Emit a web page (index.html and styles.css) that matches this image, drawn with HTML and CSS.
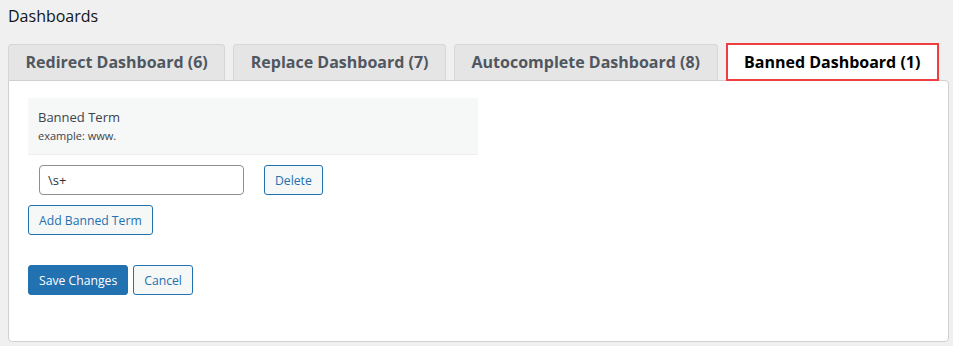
FILE: index.html
```html
<!DOCTYPE html>
<html lang="en">
<head>
    <meta charset="UTF-8">
    <title>Dashboards</title>
    <link rel="stylesheet" href="styles.css">
</head>
<body>
    <div class="wrap">
        <h2 class="page-title">Dashboards</h2>

        <!-- Onglets -->
        <nav class="tabs">
            <a class="tab">Redirect Dashboard (6)</a>
            <a class="tab">Replace Dashboard (7)</a>
            <a class="tab">Autocomplete Dashboard (8)</a>
            <a class="tab active">Banned Dashboard (1)</a>
        </nav>

        <!-- Contenu de l'onglet actif -->
        <div class="panel">
            <div class="field-head">
                <div class="field-label">Banned Term</div>
                <div class="field-hint">example: www.</div>
            </div>

            <div class="term-row">
                <input type="text" class="term-input" value="\s+">
                <button class="button">Delete</button>
            </div>

            <button class="button">Add Banned Term</button>

            <div class="actions">
                <button class="button button-primary">Save Changes</button>
                <button class="button">Cancel</button>
            </div>
        </div>
    </div>
</body>
</html>
```

FILE: styles.css
```css
/* Base */
body, html {
    margin: 0;
    padding: 0;
    background: #f0f0f1;
    font-family: "Open Sans", "Noto Sans", sans-serif;
    color: #1d2327;
}

.wrap {
    padding: 0 4px 5px 8px;
}

.page-title {
    font-size: 16px;
    font-weight: normal;
    margin: 0;
    padding: 6px 0 0 0;
    line-height: 20px;
    height: 38px;
    color: #101517;
}

/* Onglets */
.tabs {
    display: flex;
    gap: 8px;
    align-items: flex-end;
    height: 36px;
}

.tab {
    display: block;
    height: 35px;
    line-height: 35px;
    padding: 0 16.5px;
    font-size: 16px;
    font-weight: bold;
    color: #50575e;
    background: #e5e5e6;
    border: 1px solid #d6d6d8;
    border-bottom: none;
    border-radius: 4px 4px 0 0;
    position: relative;
    z-index: 1;
}

.tab.active {
    color: #000;
    background: #fff;
    border: 2px solid #ef3e42;
    border-radius: 0;
    height: 34px;
    line-height: 34px;
    padding: 0 16.5px;
    margin-bottom: -1px;
    z-index: 2;
}

/* Panneau */
.panel {
    background: #fff;
    border: 1px solid #d0d0d2;
    border-radius: 0 4px 4px 4px;
    height: 243px;
    padding: 17px 20px 0 19px;
}

.field-head {
    width: 430px;
    height: 56px;
    background: #f6f7f7;
    border-bottom: 1px solid #eeeeee;
    padding: 0 10px;
}

.field-label {
    font-size: 13px;
    padding-top: 11px;
    line-height: 16px;
    color: #3c434a;
}

.field-hint {
    font-size: 11px;
    line-height: 14px;
    margin-top: 4px;
    color: #3c434a;
}

.term-row {
    display: flex;
    gap: 20px;
    margin: 10px 0 10px 11px;
}

.term-input {
    box-sizing: border-box;
    width: 205px;
    height: 30px;
    padding: 0 8px;
    font-family: inherit;
    font-size: 13px;
    color: #2c3338;
    border: 1px solid #8c8f94;
    border-radius: 4px;
}

.button {
    box-sizing: border-box;
    height: 30px;
    padding: 0 10px;
    font-family: inherit;
    font-size: 12.2px;
    color: #2271b1;
    background: #f6f7f7;
    border: 1px solid #2271b1;
    border-radius: 3px;
}

.actions {
    display: flex;
    gap: 5px;
    margin-top: 30px;
}

.button-primary {
    background: #2271b1;
    color: #fff;
}
```
